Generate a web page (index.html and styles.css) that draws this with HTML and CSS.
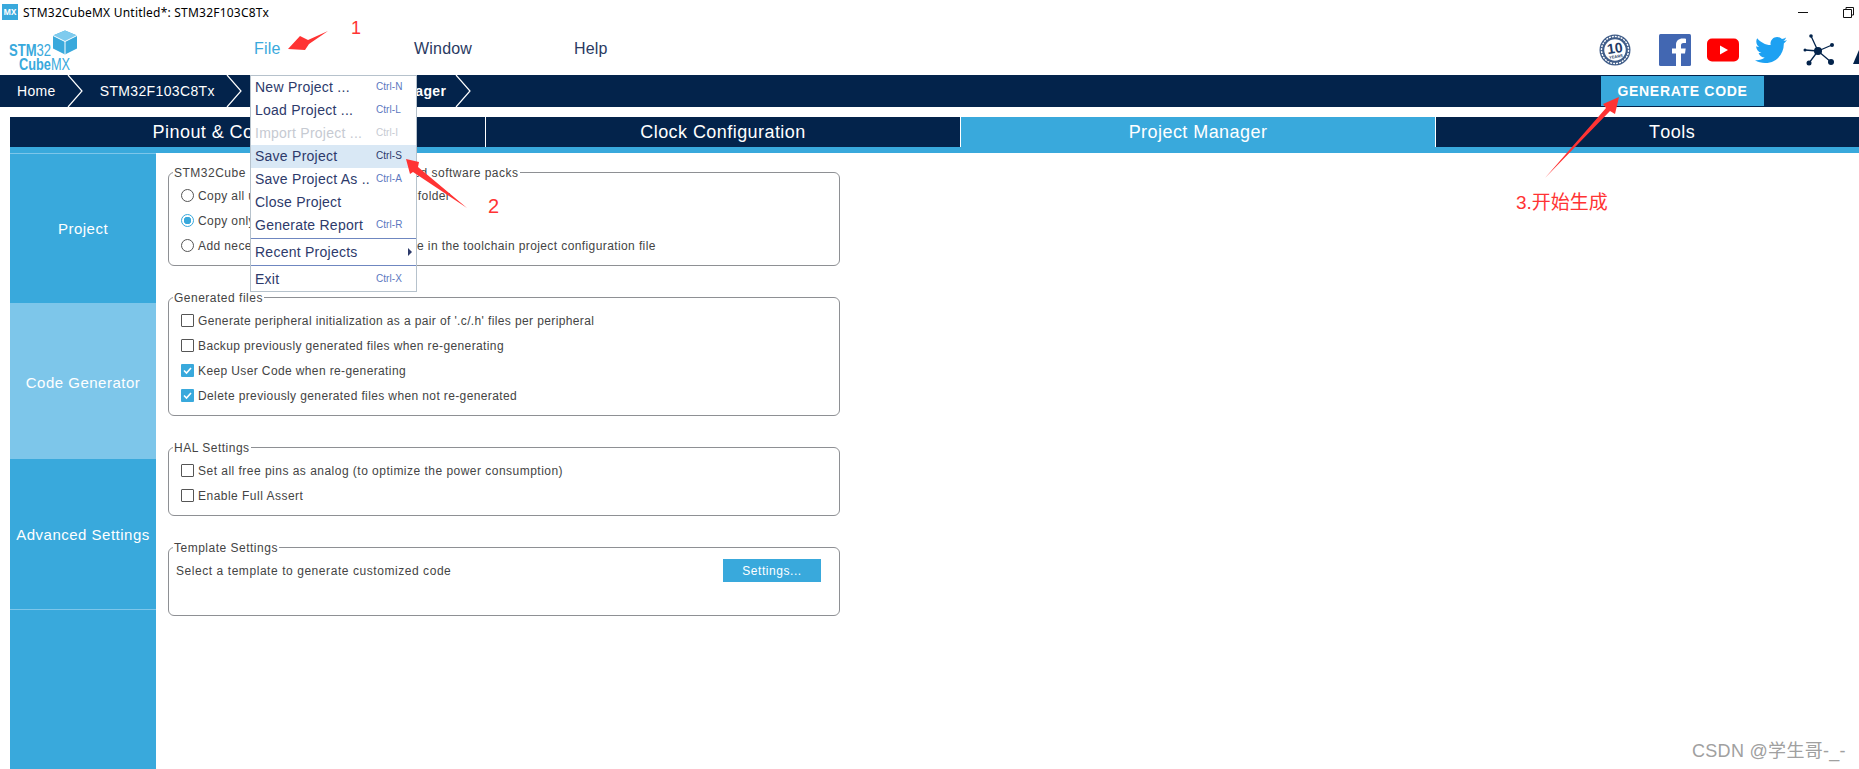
FILE: index.html
```html
<!DOCTYPE html>
<html lang="en">
<head>
<meta charset="utf-8">
<title>STM32CubeMX Untitled*: STM32F103C8Tx</title>
<link rel="stylesheet" href="styles.css">
</head>
<body>
<div class="app">
  <div class="titlebar">
    <span class="app-icon">MX</span>
    <span class="title-text">STM32CubeMX Untitled*: STM32F103C8Tx</span>
    <span class="win-min"></span>
    <svg class="win-restore" width="11" height="11" viewBox="0 0 11 11"><path d="M3 2.500V.5h7.500V8H8.500M.5 2.500h8v8h-8z" fill="none" stroke="#111"/></svg>
  </div>

  <header class="header">
    <svg class="logo" width="72" height="44" viewBox="0 0 72 44">
      <path d="M56 2.500l12 5v13l-12 6-12-6v-13z" fill="#39a9dc"/>
      <path d="M56 2.500l12 5-12 6-12-6z" fill="#7fcbee"/>
      <path d="M56 13.500v13M44 7.500l12 6 12-6" fill="none" stroke="#fff" stroke-width="1"/>
      <text class="logo-text" x="0" y="27.500" textLength="42" lengthAdjust="spacingAndGlyphs"><tspan class="logo-bold">STM</tspan>32</text>
      <text class="logo-text" x="10" y="41.500" textLength="51" lengthAdjust="spacingAndGlyphs"><tspan class="logo-bold">Cube</tspan>MX</text>
    </svg>
    <nav class="main-nav">
      <a class="nav-item nav-active">File</a>
      <a class="nav-item">Window</a>
      <a class="nav-item">Help</a>
    </nav>
    <div class="social">
      <svg class="icon-badge" width="32" height="32" viewBox="0 0 32 32">
        <circle cx="16" cy="16" r="15.500" fill="#3f5c88"/>
        <circle cx="16" cy="16" r="13.500" fill="none" stroke="#fff" stroke-width="1.400" stroke-dasharray="2 1"/>
        <circle cx="16" cy="16" r="11.500" fill="#fff" stroke="#3f5c88" stroke-width="1.500"/>
        <g transform="rotate(-8 16 16)">
          <text class="badge-num" x="16" y="19" text-anchor="middle">10</text>
          <text class="badge-sub" x="16" y="24" text-anchor="middle">YEARS</text>
        </g>
      </svg>
      <svg class="icon-fb" width="32" height="32" viewBox="0 0 32 32">
        <rect width="32" height="32" rx="1.500" fill="#4267b2"/>
        <path d="M22 32V19.500h4l.7-5H22v-3c0-1.500.5-2.500 2.500-2.500H27V4.700C26.500 4.600 25 4.500 23.500 4.500c-3.500 0-6.500 2.200-6.500 6.300v3.700h-4v5h4V32z" fill="#fff"/>
      </svg>
      <svg class="icon-yt" width="32" height="24" viewBox="0 0 32 24">
        <rect width="32" height="23" y=".5" rx="5" fill="#f00"/>
        <path d="M13 7.500l8 4.500-8 4.500z" fill="#fff"/>
      </svg>
      <svg class="icon-tw" width="32" height="26" viewBox="0 0 32 26">
        <path d="M32 3.100c-1.200.5-2.400.9-3.800 1 1.400-.8 2.400-2.100 2.900-3.600-1.300.8-2.700 1.300-4.200 1.600C25.700.8 24 0 22.100 0c-3.600 0-6.600 2.900-6.600 6.600 0 .5.100 1 .2 1.500C10.300 7.800 5.400 5.200 2.200 1.200c-.6 1-.9 2.100-.9 3.300 0 2.300 1.200 4.300 2.900 5.500-1.100 0-2.100-.3-3-.8v.1c0 3.200 2.300 5.900 5.300 6.500-.6.100-1.100.2-1.700.2-.4 0-.8 0-1.200-.1.800 2.600 3.300 4.500 6.100 4.600-2.200 1.800-5.100 2.800-8.100 2.800-.5 0-1 0-1.600-.1C3 25 6.500 26 10.100 26c12.100 0 18.700-10 18.700-18.700v-.8c1.300-.9 2.400-2.100 3.200-3.400z" fill="#1da1f2"/>
      </svg>
      <svg class="icon-net" width="32" height="32" viewBox="0 0 32 32">
        <path d="M15 17L8 2M15 17L2 16M15 17L29 11M15 17L6 29M15 17L28 28" stroke="#03234b" stroke-width="1.300"/>
        <circle cx="15" cy="17" r="4" fill="#03234b"/>
        <circle cx="8" cy="2" r="1.800" fill="#03234b"/>
        <circle cx="2" cy="16" r="1.500" fill="#03234b"/>
        <circle cx="29" cy="11" r="2" fill="#03234b"/>
        <circle cx="6" cy="29" r="2.500" fill="#03234b"/>
        <circle cx="28" cy="28" r="3" fill="#03234b"/>
      </svg>
      <svg class="icon-st" width="6" height="14" viewBox="0 0 6 14"><path d="M0 14L6 0v14z" fill="#03234b"/></svg>
    </div>
  </header>

  <div class="crumbs">
    <span class="crumb crumb-home">Home</span>
    <svg class="chev" width="16" height="32" viewBox="0 0 16 32"><path d="M1 0l14 16L1 32" fill="none" stroke="#fff" stroke-width="1.200"/></svg>
    <span class="crumb crumb-chip">STM32F103C8Tx</span>
    <svg class="chev" width="16" height="32" viewBox="0 0 16 32"><path d="M1 0l14 16L1 32" fill="none" stroke="#fff" stroke-width="1.200"/></svg>
    <span class="crumb crumb-hidden">Untitled</span>
    <svg class="chev" width="16" height="32" viewBox="0 0 16 32"><path d="M1 0l14 16L1 32" fill="none" stroke="#fff" stroke-width="1.200"/></svg>
    <span class="crumb crumb-current">Project Manager</span>
    <svg class="chev" width="16" height="32" viewBox="0 0 16 32"><path d="M1 0l14 16L1 32" fill="none" stroke="#fff" stroke-width="1.200"/></svg>
    <button class="generate">GENERATE CODE</button>
  </div>

  <div class="tabs">
    <div class="tab">Pinout &amp; Configuration</div>
    <div class="tab">Clock Configuration</div>
    <div class="tab tab-active">Project Manager</div>
    <div class="tab">Tools</div>
  </div>
  <div class="tab-strip"></div>

  <main class="main">
    <aside class="side">
      <div class="side-item side-project">Project</div>
      <div class="side-item side-selected">Code Generator</div>
      <div class="side-item side-advanced">Advanced Settings</div>
      <div class="side-rest"></div>
    </aside>
    <div class="content">
      <section class="panel panel-packs">
        <span class="legend">STM32Cube MCU packages and embedded software packs</span>
        <label class="row"><span class="radio"></span>Copy all used libraries into the project folder</label>
        <label class="row"><span class="radio radio-on"></span>Copy only the necessary library files</label>
        <label class="row"><span class="radio"></span>Add necessary library files as reference in the toolchain project configuration file</label>
      </section>
      <section class="panel panel-files">
        <span class="legend">Generated files</span>
        <label class="row"><span class="check"></span>Generate peripheral initialization as a pair of '.c/.h' files per peripheral</label>
        <label class="row"><span class="check"></span>Backup previously generated files when re-generating</label>
        <label class="row"><span class="check check-on"><svg width="13" height="13" viewBox="0 0 13 13"><path d="M3 6.500l2.500 2.500 4.500-5" fill="none" stroke="#fff" stroke-width="1.600"/></svg></span>Keep User Code when re-generating</label>
        <label class="row"><span class="check check-on"><svg width="13" height="13" viewBox="0 0 13 13"><path d="M3 6.500l2.500 2.500 4.500-5" fill="none" stroke="#fff" stroke-width="1.600"/></svg></span>Delete previously generated files when not re-generated</label>
      </section>
      <section class="panel panel-hal">
        <span class="legend">HAL Settings</span>
        <label class="row"><span class="check"></span>Set all free pins as analog (to optimize the power consumption)</label>
        <label class="row"><span class="check"></span>Enable Full Assert</label>
      </section>
      <section class="panel panel-template">
        <span class="legend">Template Settings</span>
        <div class="template-row">
          <span>Select a template to generate customized code</span>
          <button class="settings">Settings...</button>
        </div>
      </section>
    </div>
  </main>

  <div class="menu">
    <div class="menu-item"><span>New Project ...</span><span class="key">Ctrl-N</span></div>
    <div class="menu-item"><span>Load Project ...</span><span class="key">Ctrl-L</span></div>
    <div class="menu-item menu-disabled"><span>Import Project ...</span><span class="key">Ctrl-I</span></div>
    <div class="menu-item menu-hover"><span>Save Project</span><span class="key">Ctrl-S</span></div>
    <div class="menu-item"><span>Save Project As ..</span><span class="key">Ctrl-A</span></div>
    <div class="menu-item"><span>Close Project</span></div>
    <div class="menu-item"><span>Generate Report</span><span class="key">Ctrl-R</span></div>
    <div class="menu-sep"></div>
    <div class="menu-item menu-sub"><span>Recent Projects</span><span class="sub-arrow"></span></div>
    <div class="menu-sep"></div>
    <div class="menu-item menu-last"><span>Exit</span><span class="key">Ctrl-X</span></div>
  </div>

  <svg class="marks" width="1859" height="769" viewBox="0 0 1859 769">
    <path d="M328 31L308 40 300 36 288 49 305 50 309 44z" fill="#f33"/>
    <path d="M406 159L419 162 418 167 467 208 413 172 410 174z" fill="#f33"/>
    <path d="M1545 178L1606 108 1603 104 1619 97 1615 114 1610 111z" fill="#f33"/>
  </svg>
  <span class="mark-text mark-one">1</span>
  <span class="mark-text mark-two">2</span>
  <span class="mark-text mark-three">3.开始生成</span>
  <span class="watermark">CSDN @学生哥-_-</span>
</div>
</body>
</html>
```
FILE: styles.css
```css
* { box-sizing: border-box; }
html, body { margin: 0; padding: 0; background: #fff; }
body { font-family: "Liberation Sans", Arial, sans-serif; color: #444; }

.app {
  position: relative;
  width: 1859px;
  height: 769px;
  overflow: hidden;
  display: flex;
  flex-direction: column;
}

/* Title bar */
.titlebar {
  height: 24px;
  display: flex;
  align-items: center;
  padding-left: 2px;
  color: #000;
  font-family: "Noto Sans", "Liberation Sans", sans-serif;
  font-size: 12px;
}
.app-icon {
  width: 16px;
  height: 16px;
  background: #39a9dc;
  color: #fff;
  font-size: 8px;
  font-weight: 700;
  line-height: 16px;
  text-align: center;
}
.title-text { margin-left: 5px; letter-spacing: .22px; }
.win-min {
  width: 10px;
  height: 1px;
  background: #111;
  margin-left: auto;
  margin-right: 35px;
}
.win-restore { margin-right: 5px; }

/* Header */
.header {
  height: 51px;
  display: flex;
  align-items: center;
  padding-left: 9px;
}
.logo { flex: none; }
.logo-text {
  font-family: "Liberation Sans", sans-serif;
  font-size: 16px;
  fill: #39a9dc;
}
.logo-bold { font-weight: 700; }
.main-nav {
  display: grid;
  grid-template-columns: 160px 160px 160px;
  margin: -2px 0 0 173px;
}
.nav-item { font-size: 16px; color: #2a3a62; letter-spacing: .2px; }
.nav-active { color: #39a9dc; }
.social {
  margin-left: auto;
  display: flex;
  align-items: center;
}
.icon-fb { margin-left: 28px; }
.icon-yt { margin-left: 16px; }
.icon-tw { margin-left: 16px; }
.icon-net { margin-left: 16px; }
.icon-st { margin-left: 18px; margin-top: 14px; }
.badge-num { font: 700 14px "Liberation Sans", sans-serif; fill: #1f3a66; }
.badge-sub { font: 700 4px "Liberation Sans", sans-serif; fill: #1f3a66; }

/* Breadcrumbs */
.crumbs {
  height: 32px;
  background: #03234b;
  display: flex;
  align-items: center;
  color: #fff;
  font-size: 14px;
  letter-spacing: .35px;
}
.crumb { margin-left: 18px; margin-right: 11px; }
.crumb-home { margin-left: 17px; }
.crumb-chip { margin-left: 17px; }
.crumb-hidden { margin-right: 0; }
.crumb-current { font-weight: 700; margin-left: 6px; margin-right: 9px; }
.chev { flex: none; }
.generate {
  margin-left: auto;
  margin-right: 95px;
  width: 163px;
  height: 30px;
  border: 0;
  padding: 0;
  background: #39a9dc;
  color: #fff;
  font: 700 14px "Liberation Sans", sans-serif;
  letter-spacing: .7px;
}

/* Tabs */
.tabs {
  margin: 10px 0 0 10px;
  height: 30px;
  width: 1898px;
  flex: none;
  display: grid;
  grid-template-columns: 476px 475px 475px 472px;
  background: #03234b;
}
.tab {
  color: #fff;
  font-size: 18px;
  font-kerning: none;
  line-height: 31px;
  letter-spacing: .44px;
  text-align: center;
  border-right: 1px solid #fff;
}
.tab:last-child { border-right: 0; }
.tab-active { background: #39a9dc; }
.tab-strip { margin-left: 10px; height: 6px; background: #39a9dc; }

/* Main */
.main { flex: 1; display: flex; margin-left: 10px; min-height: 0; }
.side {
  width: 146px;
  background: #39a9dc;
  display: flex;
  flex-direction: column;
  color: #fff;
  font-size: 15px;
  letter-spacing: .5px;
}
.side-item {
  display: flex;
  align-items: center;
  justify-content: center;
}
.side-project { height: 152px; border-top: 1px solid #7dc6ea; border-bottom: 2px solid #7dc6ea; }
.side-selected { height: 154px; background: #7dc6ea; }
.side-advanced { height: 150px; }
.side-rest { flex: 1; border-top: 1px solid #7dc6ea; }

.content {
  padding: 19px 0 0 12px;
  font-size: 12px;
  letter-spacing: .4px;
}
.panel {
  position: relative;
  width: 672px;
  border: 1px solid #8e9094;
  border-radius: 6px;
  margin-bottom: 31px;
}
.panel-packs { height: 94px; padding-top: 10px; }
.panel-files { height: 119px; padding-top: 10px; letter-spacing: .38px; }
.panel-hal { height: 69px; padding-top: 10px; letter-spacing: .48px; }
.panel-template { height: 69px; letter-spacing: .56px; }
.legend {
  position: absolute;
  top: -7px;
  left: 4px;
  padding: 0 1px;
  background: #fff;
  line-height: 15px;
  letter-spacing: .5px;
}
.row {
  height: 25px;
  display: flex;
  align-items: center;
  padding-left: 12px;
}
.radio, .check {
  flex: none;
  width: 13px;
  height: 13px;
  margin-right: 4px;
  background: #fff;
  border: 1px solid #555;
}
.radio { border-radius: 50%; }
.radio-on {
  border-color: #39a9dc;
  background: radial-gradient(circle, #39a9dc 0 3.500px, #fff 4px);
}
.check { border-radius: 1px; }
.check-on { border: 0; background: #39a9dc; display: flex; }
.template-row {
  display: flex;
  align-items: center;
  justify-content: space-between;
  padding: 11px 18px 0 7px;
}
.settings {
  width: 98px;
  height: 23px;
  border: 0;
  padding: 0;
  background: #39a9dc;
  color: #fff;
  font: 12px "Liberation Sans", sans-serif;
  letter-spacing: .55px;
}

/* File menu */
.menu {
  position: absolute;
  left: 250px;
  top: 75px;
  width: 167px;
  height: 217px;
  background: #fff;
  border: 1px solid #b6c2cc;
  color: #2d3a6b;
  font-size: 14px;
  letter-spacing: .25px;
}
.menu-item {
  height: 23px;
  display: grid;
  grid-template-columns: 121px 1fr;
  align-items: center;
  padding: 0 0 2px 4px;
}
.menu-disabled { color: #c6cad2; }
.menu-disabled .key { color: #c6cad2; }
.menu-hover { background: #d9e8f5; }
.menu-hover .key { color: #2d3a6b; }
.key { font-size: 10px; letter-spacing: .05px; color: #5b78c0; }
.menu-sep { height: 1px; background: #6f87c0; margin: 1px 0; }
.menu-sub { height: 24px; padding-bottom: 0; }
.menu-last { padding-bottom: 0; }
.sub-arrow {
  justify-self: end;
  margin-right: 4px;
  width: 0;
  height: 0;
  border-left: 4px solid #2d3a6b;
  border-top: 4px solid transparent;
  border-bottom: 4px solid transparent;
}

/* Annotations drawn over the screenshot */
.marks { position: absolute; left: 0; top: 0; pointer-events: none; }
.mark-text {
  position: absolute;
  color: #f33;
  font-family: "Liberation Sans", "Noto Sans CJK SC", sans-serif;
  line-height: 1;
  white-space: nowrap;
}
.mark-one { left: 351px; top: 19px; font-size: 18px; }
.mark-two { left: 488px; top: 196px; font-size: 20px; }
.mark-three { left: 1516px; top: 193px; font-size: 19px; }
.watermark {
  position: absolute;
  left: 1692px;
  top: 741px;
  color: #a0a0a0;
  font-family: "Liberation Sans", "Noto Sans CJK SC", sans-serif;
  font-size: 18px;
  letter-spacing: .3px;
  line-height: 1.2;
  white-space: nowrap;
}
```
